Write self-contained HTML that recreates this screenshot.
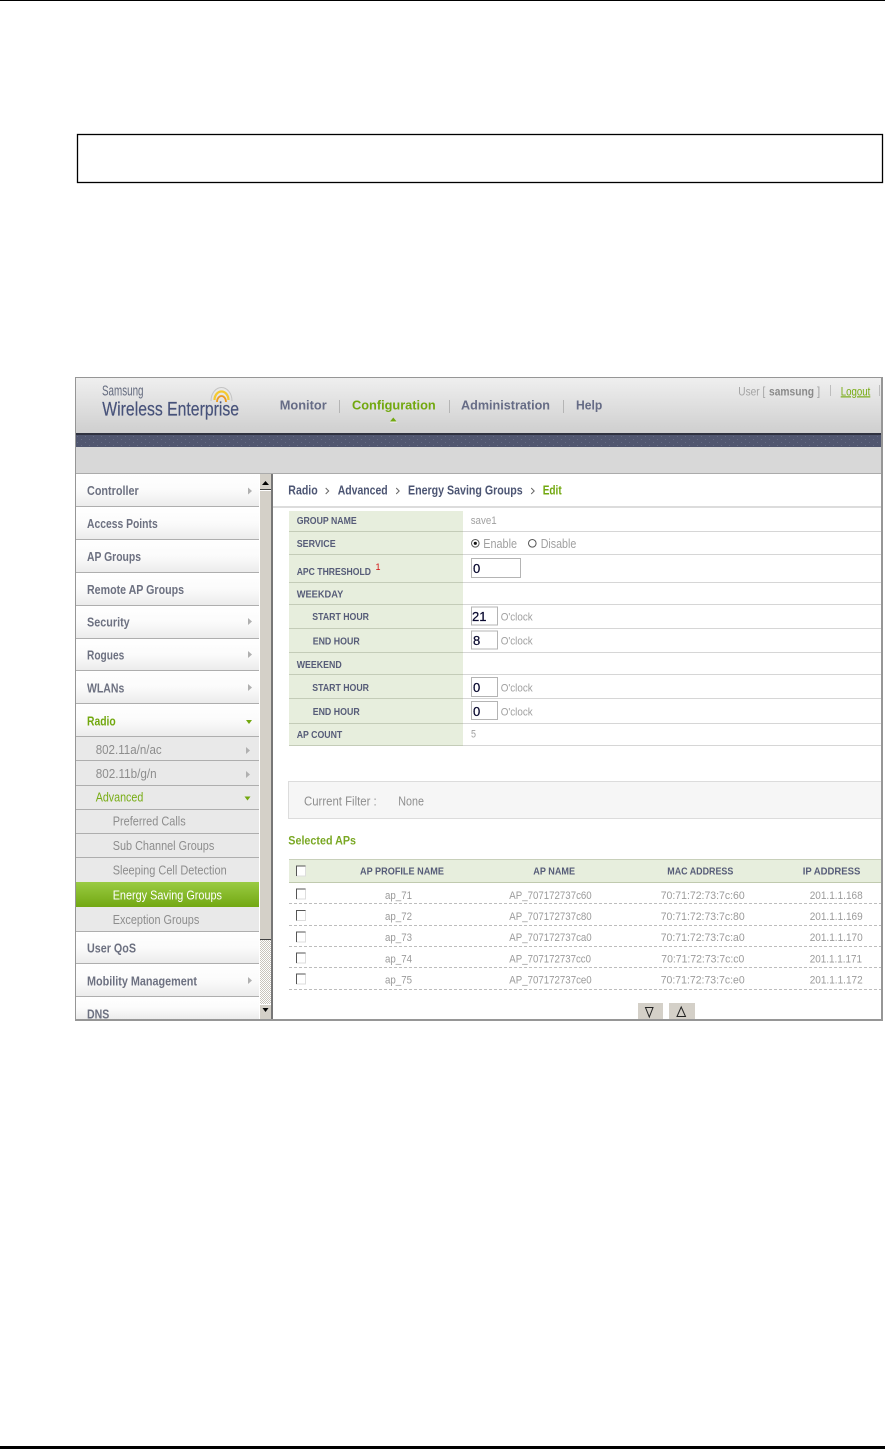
<!DOCTYPE html>
<html><head><meta charset="utf-8"><title>Energy Saving Groups</title>
<style>
html,body{margin:0;padding:0;background:#fff}
svg{display:block;font-family:"Liberation Sans",Arial,sans-serif}
.s{font-weight:700;font-size:12.5px;fill:#6d7181}
.u{font-size:12.5px;fill:#8d8d8d}
.l{font-weight:700;font-size:10.5px;fill:#565c78}
.v{font-size:11px;fill:#a0a0a0}
.h{font-weight:700;font-size:13px;fill:#666c86}
.b{font-weight:700;font-size:12.5px;fill:#4c5573}
.g{fill:#72a80f}
.t{font-size:11px;fill:#9a9a9a}
.i{font-size:13px;fill:#0a0a30;stroke:#0a0a30;stroke-width:.25px}
</style></head><body>
<svg width="885" height="1449" viewBox="0 0 885 1449" xmlns="http://www.w3.org/2000/svg">
<defs>
<linearGradient id="hd" x1="0" y1="0" x2="0" y2="1"><stop offset="0" stop-color="#efefef"/><stop offset="1" stop-color="#cfcfcf"/></linearGradient>
<linearGradient id="row" x1="0" y1="0" x2="0" y2="1"><stop offset="0" stop-color="#ffffff"/><stop offset=".5" stop-color="#fbfbfb"/><stop offset="1" stop-color="#ececec"/></linearGradient>
<linearGradient id="grn" x1="0" y1="0" x2="0" y2="1"><stop offset="0" stop-color="#9acb43"/><stop offset="1" stop-color="#72a812"/></linearGradient>
<pattern id="dots" x="76" y="435" width="8" height="6" patternUnits="userSpaceOnUse"><rect width="8" height="6" fill="#50566f"/><rect x="1" y="1" width="1" height="1" fill="#666c84"/><rect x="5" y="4" width="1" height="1" fill="#666c84"/></pattern>
<pattern id="dith" x="0" y="0" width="2" height="2" patternUnits="userSpaceOnUse"><rect width="2" height="2" fill="#fff"/><rect width="1" height="1" fill="#c8c4bc"/><rect x="1" y="1" width="1" height="1" fill="#c8c4bc"/></pattern>
</defs>
<rect width="885" height="1449" fill="#fff"/>
<rect x="0" y="0" width="885" height="1" fill="#000"/>
<rect x="0" y="1446" width="885" height="3" fill="#000"/>
<rect x="77.5" y="134.5" width="805" height="48" fill="#fff" stroke="#000" stroke-width="1.3"/>

<!-- frame -->
<rect x="75" y="377" width="808" height="644" fill="#fff"/>
<rect x="76" y="378" width="806" height="55" fill="url(#hd)"/>
<rect x="76" y="433" width="806" height="2" fill="#2f3240"/>
<rect x="76" y="435" width="806" height="12" fill="url(#dots)"/>
<rect x="76" y="447" width="806" height="26" fill="#d8d8d8"/>
<rect x="76" y="473" width="806" height="1" fill="#ababab"/>

<!-- logo -->
<text x="102" y="395.5" font-size="15" fill="#636a7e" textLength="41.5" lengthAdjust="spacingAndGlyphs">Samsung</text>
<text x="102.3" y="415.7" font-size="19.5" fill="#47527a" stroke="#47527a" stroke-width=".2" textLength="136.7" lengthAdjust="spacingAndGlyphs">Wireless Enterprise</text>
<path d="M211 401A10.5 13.5 0 0 1 232 401" fill="none" stroke="#c4c4c4" stroke-width="1"/>
<path d="M214.5 400A7 8.5 0 0 1 228.5 400" fill="none" stroke="#f4c930" stroke-width="2.2"/>
<path d="M217 402A4.5 6 0 0 1 226 402" fill="none" stroke="#ee9a1e" stroke-width="1.8"/>

<!-- top nav -->
<text class="h" x="279.7" y="409.3" textLength="47" lengthAdjust="spacingAndGlyphs">Monitor</text>
<rect x="339" y="400" width="1" height="13" fill="#b5b5b5"/>
<text class="h g" x="352" y="409.3" textLength="83.7" lengthAdjust="spacingAndGlyphs">Configuration</text>
<path d="M390 421.5L393.3 417.5L396.6 421.5Z" fill="#72a80f"/>
<rect x="390" y="421.5" width="7" height="1" fill="#f4f4f4"/>
<rect x="449" y="400" width="1" height="13" fill="#b5b5b5"/>
<text class="h" x="461" y="409.3" textLength="89" lengthAdjust="spacingAndGlyphs">Administration</text>
<rect x="563" y="400" width="1" height="13" fill="#b5b5b5"/>
<text class="h" x="576" y="409.3" textLength="26.3" lengthAdjust="spacingAndGlyphs">Help</text>
<text x="738.3" y="395.3" font-size="11.5" fill="#a3a3a3" textLength="27" lengthAdjust="spacingAndGlyphs">User [</text>
<text x="769" y="395.3" font-size="11.5" font-weight="700" fill="#8a8a8a" textLength="45" lengthAdjust="spacingAndGlyphs">samsung</text>
<text x="817" y="395.3" font-size="11.5" fill="#a3a3a3">]</text>
<rect x="830" y="385" width="1" height="11" fill="#bdbdbd"/>
<text x="840.7" y="395.3" font-size="11.5" fill="#76ab10" text-decoration="underline" textLength="29.6" lengthAdjust="spacingAndGlyphs">Logout</text>
<rect x="879" y="385" width="1" height="11" fill="#bdbdbd"/>

<!-- sidebar rows -->
<g fill="url(#row)">
<rect x="76" y="474" width="183" height="32"/><rect x="76" y="507" width="183" height="32"/><rect x="76" y="540" width="183" height="32"/><rect x="76" y="573" width="183" height="32"/><rect x="76" y="606" width="183" height="32"/><rect x="76" y="639" width="183" height="31"/><rect x="76" y="671" width="183" height="32"/><rect x="76" y="704" width="183" height="32"/><rect x="76" y="932" width="183" height="31"/><rect x="76" y="964" width="183" height="32"/><rect x="76" y="997" width="183" height="22"/>
</g>
<rect x="76" y="737" width="183" height="195" fill="#e9e9e9"/>
<rect x="76" y="882" width="183" height="25" fill="url(#grn)"/>
<g fill="#aeaeae">
<rect x="76" y="506" width="183" height="1"/><rect x="76" y="539" width="183" height="1"/><rect x="76" y="572" width="183" height="1"/><rect x="76" y="605" width="183" height="1"/><rect x="76" y="638" width="183" height="1"/><rect x="76" y="670" width="183" height="1"/><rect x="76" y="703" width="183" height="1"/><rect x="76" y="736" width="183" height="1"/><rect x="76" y="760" width="183" height="1"/><rect x="76" y="785" width="183" height="1"/><rect x="76" y="809" width="183" height="1"/><rect x="76" y="833" width="183" height="1"/><rect x="76" y="857" width="183" height="1"/><rect x="76" y="931" width="183" height="1"/><rect x="76" y="963" width="183" height="1"/><rect x="76" y="996" width="183" height="1"/>
</g>
<text class="s" x="87" y="495" textLength="51.7" lengthAdjust="spacingAndGlyphs">Controller</text>
<text class="s" x="87" y="528" textLength="70.7" lengthAdjust="spacingAndGlyphs">Access Points</text>
<text class="s" x="87" y="561" textLength="54" lengthAdjust="spacingAndGlyphs">AP Groups</text>
<text class="s" x="87" y="594" textLength="97" lengthAdjust="spacingAndGlyphs">Remote AP Groups</text>
<text class="s" x="87" y="626.7" textLength="42.7" lengthAdjust="spacingAndGlyphs">Security</text>
<text class="s" x="87" y="659.3" textLength="37.3" lengthAdjust="spacingAndGlyphs">Rogues</text>
<text class="s" x="87" y="692.7" textLength="37.3" lengthAdjust="spacingAndGlyphs">WLANs</text>
<text class="s g" x="87" y="725.7" textLength="28.7" lengthAdjust="spacingAndGlyphs">Radio</text>
<text class="u" x="95.7" y="754" textLength="66" lengthAdjust="spacingAndGlyphs">802.11a/n/ac</text>
<text class="u" x="95.7" y="778" textLength="61" lengthAdjust="spacingAndGlyphs">802.11b/g/n</text>
<text class="u" x="95.7" y="801.7" style="fill:#78ad15" textLength="47.6" lengthAdjust="spacingAndGlyphs">Advanced</text>
<text class="u" x="112.7" y="825.7" textLength="73" lengthAdjust="spacingAndGlyphs">Preferred Calls</text>
<text class="u" x="112.7" y="850" textLength="101.6" lengthAdjust="spacingAndGlyphs">Sub Channel Groups</text>
<text class="u" x="112.7" y="874.7" textLength="114" lengthAdjust="spacingAndGlyphs">Sleeping Cell Detection</text>
<text class="u" x="112.7" y="899.7" style="fill:#fff" textLength="109.3" lengthAdjust="spacingAndGlyphs">Energy Saving Groups</text>
<text class="u" x="112.7" y="924" textLength="86.6" lengthAdjust="spacingAndGlyphs">Exception Groups</text>
<text class="s" x="87" y="952.7" textLength="49" lengthAdjust="spacingAndGlyphs">User QoS</text>
<text class="s" x="87" y="985.7" textLength="110" lengthAdjust="spacingAndGlyphs">Mobility Management</text>
<svg x="76" y="974" width="183" height="45"><text class="s" x="11" y="44.7" textLength="22.3" lengthAdjust="spacingAndGlyphs">DNS</text></svg>
<g fill="#b0b0b0">
<path d="M248 487.5L252 491L248 494.5Z"/><path d="M248 618L252 621.5L248 625Z"/><path d="M248 651L252 654.5L248 658Z"/><path d="M248 684L252 687.5L248 691Z"/><path d="M248 977L252 980.5L248 984Z"/><path d="M246 747L250 750.5L246 754Z"/><path d="M246 771L250 774.5L246 778Z"/>
</g>
<path d="M246 720H252L249 724Z" fill="#72a80f"/>
<path d="M244.5 796.5H250.5L247.5 800.5Z" fill="#72a80f"/>

<!-- scrollbar -->
<rect x="259" y="474" width="14" height="545" fill="#d4d0c8"/>
<rect x="260" y="940" width="11" height="64" fill="url(#dith)"/>
<rect x="260" y="489" width="11" height="1" fill="#404040"/>
<rect x="260" y="490" width="11" height="1" fill="#fff"/>
<rect x="260" y="939" width="11" height="1" fill="#404040"/>
<rect x="259" y="474" width="1" height="545" fill="#fff"/>
<rect x="271" y="474" width="2" height="545" fill="#777"/>
<path d="M262 485H269L265.5 481Z" fill="#000"/>
<path d="M262.5 1008H268.5L265.5 1012Z" fill="#000"/>
<rect x="260" y="1004" width="11" height="1" fill="#fff"/>

<!-- breadcrumb -->
<text class="b" x="288.3" y="494.7" textLength="29.4" lengthAdjust="spacingAndGlyphs">Radio</text>
<path d="M325.7 488L328.7 491L325.7 494M396.2 488L399.2 491L396.2 494M531.2 488L534.2 491L531.2 494" fill="none" stroke="#666" stroke-width="1"/>
<text class="b" x="337.7" y="494.7" textLength="50" lengthAdjust="spacingAndGlyphs">Advanced</text>
<text class="b" x="408" y="494.7" textLength="114.7" lengthAdjust="spacingAndGlyphs">Energy Saving Groups</text>
<text class="b g" x="542.7" y="494.7" textLength="19" lengthAdjust="spacingAndGlyphs">Edit</text>
<rect x="273" y="506" width="608" height="2" fill="#dcdcdc"/>

<!-- form table -->
<rect x="289" y="511" width="174" height="235" fill="#e7eedd"/>
<g fill="#d6d6d6">
<rect x="463" y="531" width="418" height="1"/><rect x="463" y="554" width="418" height="1"/><rect x="463" y="582" width="418" height="1"/><rect x="463" y="604" width="418" height="1"/><rect x="463" y="628" width="418" height="1"/><rect x="463" y="652" width="418" height="1"/><rect x="463" y="674" width="418" height="1"/><rect x="463" y="698" width="418" height="1"/><rect x="463" y="723" width="418" height="1"/><rect x="463" y="745" width="418" height="1"/>
</g>
<g fill="#c4ccb8">
<rect x="289" y="531" width="174" height="1"/><rect x="289" y="554" width="174" height="1"/><rect x="289" y="582" width="174" height="1"/><rect x="289" y="604" width="174" height="1"/><rect x="289" y="628" width="174" height="1"/><rect x="289" y="652" width="174" height="1"/><rect x="289" y="674" width="174" height="1"/><rect x="289" y="698" width="174" height="1"/><rect x="289" y="723" width="174" height="1"/><rect x="289" y="745" width="174" height="1"/>
</g>
<text class="l" x="296.7" y="524" textLength="60" lengthAdjust="spacingAndGlyphs">GROUP NAME</text>
<text class="l" x="296.7" y="547" textLength="39" lengthAdjust="spacingAndGlyphs">SERVICE</text>
<text class="l" x="296.7" y="575" textLength="74.3" lengthAdjust="spacingAndGlyphs">APC THRESHOLD</text>
<text x="375.5" y="570" font-size="9" fill="#d01010">1</text>
<text class="l" x="296.7" y="597.3" textLength="46.6" lengthAdjust="spacingAndGlyphs">WEEKDAY</text>
<text class="l" x="312.3" y="620" textLength="56.7" lengthAdjust="spacingAndGlyphs">START HOUR</text>
<text class="l" x="312.7" y="644.3" textLength="47" lengthAdjust="spacingAndGlyphs">END HOUR</text>
<text class="l" x="296.7" y="668" textLength="45" lengthAdjust="spacingAndGlyphs">WEEKEND</text>
<text class="l" x="312.3" y="691" textLength="56.7" lengthAdjust="spacingAndGlyphs">START HOUR</text>
<text class="l" x="312.7" y="715" textLength="47" lengthAdjust="spacingAndGlyphs">END HOUR</text>
<text class="l" x="296.7" y="738" textLength="45.6" lengthAdjust="spacingAndGlyphs">AP COUNT</text>

<text class="v" x="470.7" y="524" textLength="26" lengthAdjust="spacingAndGlyphs">save1</text>
<circle cx="475.3" cy="543.3" r="3.8" fill="#fff" stroke="#555" stroke-width="1"/><circle cx="475.3" cy="543.3" r="1.6" fill="#111"/>
<text class="v" x="483.3" y="548" style="font-size:13px" textLength="33.7" lengthAdjust="spacingAndGlyphs">Enable</text>
<circle cx="532.3" cy="543.3" r="3.8" fill="#fff" stroke="#555" stroke-width="1"/>
<text class="v" x="540.7" y="548" style="font-size:13px" textLength="35.6" lengthAdjust="spacingAndGlyphs">Disable</text>
<g fill="#fff" stroke="#b4b4b4" stroke-width="1">
<rect x="471.5" y="558.500" width="49" height="19"/>
<rect x="471.5" y="607" width="26" height="18"/>
<rect x="471.5" y="631" width="26" height="18"/>
<rect x="471.5" y="677.5" width="26" height="19"/>
<rect x="471.5" y="701.5" width="26" height="18"/>
</g>
<text class="i" x="473" y="573">0</text>
<text class="i" x="472" y="621">21</text>
<text class="i" x="473" y="645">8</text>
<text class="i" x="473" y="692">0</text>
<text class="i" x="473" y="716">0</text>
<text class="v" x="500.7" y="620.7" textLength="32" lengthAdjust="spacingAndGlyphs">O'clock</text>
<text class="v" x="500.7" y="644.7" textLength="32" lengthAdjust="spacingAndGlyphs">O'clock</text>
<text class="v" x="500.7" y="691.7" textLength="32" lengthAdjust="spacingAndGlyphs">O'clock</text>
<text class="v" x="500.7" y="715.3" textLength="32" lengthAdjust="spacingAndGlyphs">O'clock</text>
<text class="v" x="471" y="737.3" textLength="5" lengthAdjust="spacingAndGlyphs">5</text>

<!-- filter -->
<rect x="288.5" y="781.5" width="600" height="37" fill="#f6f6f6" stroke="#dcdcdc" stroke-width="1"/>
<rect x="881" y="775" width="4" height="50" fill="#fff"/>
<text class="u" x="304" y="805.3" style="fill:#8f8f8f" textLength="72.7" lengthAdjust="spacingAndGlyphs">Current Filter :</text>
<text class="u" x="398.3" y="805.3" style="fill:#8f8f8f" textLength="25.7" lengthAdjust="spacingAndGlyphs">None</text>

<text x="288.3" y="844.7" font-size="12" font-weight="700" fill="#7aa824" textLength="67.7" lengthAdjust="spacingAndGlyphs">Selected APs</text>

<!-- AP table -->
<rect x="289" y="860" width="592" height="22" fill="#e7eedd"/>
<rect x="289" y="859" width="592" height="1" fill="#c8d0ba"/>
<rect x="289" y="882" width="592" height="1" fill="#c0caae"/>
<text class="l" x="360" y="874.3" textLength="84" lengthAdjust="spacingAndGlyphs">AP PROFILE NAME</text>
<text class="l" x="533.3" y="874.3" textLength="41.7" lengthAdjust="spacingAndGlyphs">AP NAME</text>
<text class="l" x="667.3" y="874.3" textLength="66" lengthAdjust="spacingAndGlyphs">MAC ADDRESS</text>
<text class="l" x="802.7" y="874.3" textLength="57.6" lengthAdjust="spacingAndGlyphs">IP ADDRESS</text>
<g fill="#fff" stroke="#ddd" stroke-width="1">
<rect x="296.5" y="866" width="9" height="10"/>
<rect x="296.5" y="889" width="9" height="10"/>
<rect x="296.5" y="910.5" width="9" height="10"/>
<rect x="296.5" y="932" width="9" height="10"/>
<rect x="296.5" y="953" width="9" height="10"/>
<rect x="296.5" y="974" width="9" height="10"/>
</g>
<g fill="none" stroke="#555" stroke-width="1">
<path d="M296.5 876V866H305.5M296.5 899V889H305.5M296.5 920.5V910.5H305.5M296.5 942V932H305.5M296.5 963V953H305.5M296.5 984V974H305.5"/>
</g>
<g fill="none" stroke="#bdbdbd" stroke-width="1" stroke-dasharray="3 2">
<path d="M289 903.5H881M289 925.5H881M289 946.5H881M289 967.5H881M289 989.5H881"/>
</g>
<text class="t" x="385" y="899" textLength="27" lengthAdjust="spacingAndGlyphs">ap_71</text>
<text class="t" x="385" y="920" textLength="27" lengthAdjust="spacingAndGlyphs">ap_72</text>
<text class="t" x="385" y="941" textLength="27" lengthAdjust="spacingAndGlyphs">ap_73</text>
<text class="t" x="385" y="962.3" textLength="27" lengthAdjust="spacingAndGlyphs">ap_74</text>
<text class="t" x="385" y="983.7" textLength="27" lengthAdjust="spacingAndGlyphs">ap_75</text>
<text class="t" x="509.3" y="899" textLength="82.4" lengthAdjust="spacingAndGlyphs">AP_707172737c60</text>
<text class="t" x="509.3" y="920" textLength="82.4" lengthAdjust="spacingAndGlyphs">AP_707172737c80</text>
<text class="t" x="509.3" y="941" textLength="82.4" lengthAdjust="spacingAndGlyphs">AP_707172737ca0</text>
<text class="t" x="509.3" y="962.3" textLength="81.7" lengthAdjust="spacingAndGlyphs">AP_707172737cc0</text>
<text class="t" x="509.3" y="983.7" textLength="82.4" lengthAdjust="spacingAndGlyphs">AP_707172737ce0</text>
<text class="t" x="660.7" y="899" textLength="84" lengthAdjust="spacingAndGlyphs">70:71:72:73:7c:60</text>
<text class="t" x="660.7" y="920" textLength="84" lengthAdjust="spacingAndGlyphs">70:71:72:73:7c:80</text>
<text class="t" x="660.7" y="941" textLength="84" lengthAdjust="spacingAndGlyphs">70:71:72:73:7c:a0</text>
<text class="t" x="661.3" y="962.3" textLength="83" lengthAdjust="spacingAndGlyphs">70:71:72:73:7c:c0</text>
<text class="t" x="660.7" y="983.7" textLength="84" lengthAdjust="spacingAndGlyphs">70:71:72:73:7c:e0</text>
<text class="t" x="809.7" y="899" textLength="53" lengthAdjust="spacingAndGlyphs">201.1.1.168</text>
<text class="t" x="809.7" y="920" textLength="53" lengthAdjust="spacingAndGlyphs">201.1.1.169</text>
<text class="t" x="809.7" y="941" textLength="53" lengthAdjust="spacingAndGlyphs">201.1.1.170</text>
<text class="t" x="809.7" y="962.3" textLength="52.3" lengthAdjust="spacingAndGlyphs">201.1.1.171</text>
<text class="t" x="809.7" y="983.7" textLength="53" lengthAdjust="spacingAndGlyphs">201.1.1.172</text>

<!-- buttons -->
<rect x="638" y="1003" width="25" height="16" fill="#d4d0c8"/>
<rect x="669" y="1003" width="26" height="16" fill="#d4d0c8"/>
<path d="M645.5 1007.5H653L649.3 1017Z" fill="none" stroke="#222" stroke-width="1"/>
<path d="M677 1016.5H685.5L681.2 1007Z" fill="none" stroke="#222" stroke-width="1"/>

<!-- frame border -->
<g fill="#969696">
<rect x="75" y="377" width="808" height="1"/>
<rect x="75" y="1019" width="808" height="2"/>
<rect x="75" y="377" width="1" height="644"/>
<rect x="881" y="377" width="2" height="644"/>
</g>
</svg>
</body></html>
